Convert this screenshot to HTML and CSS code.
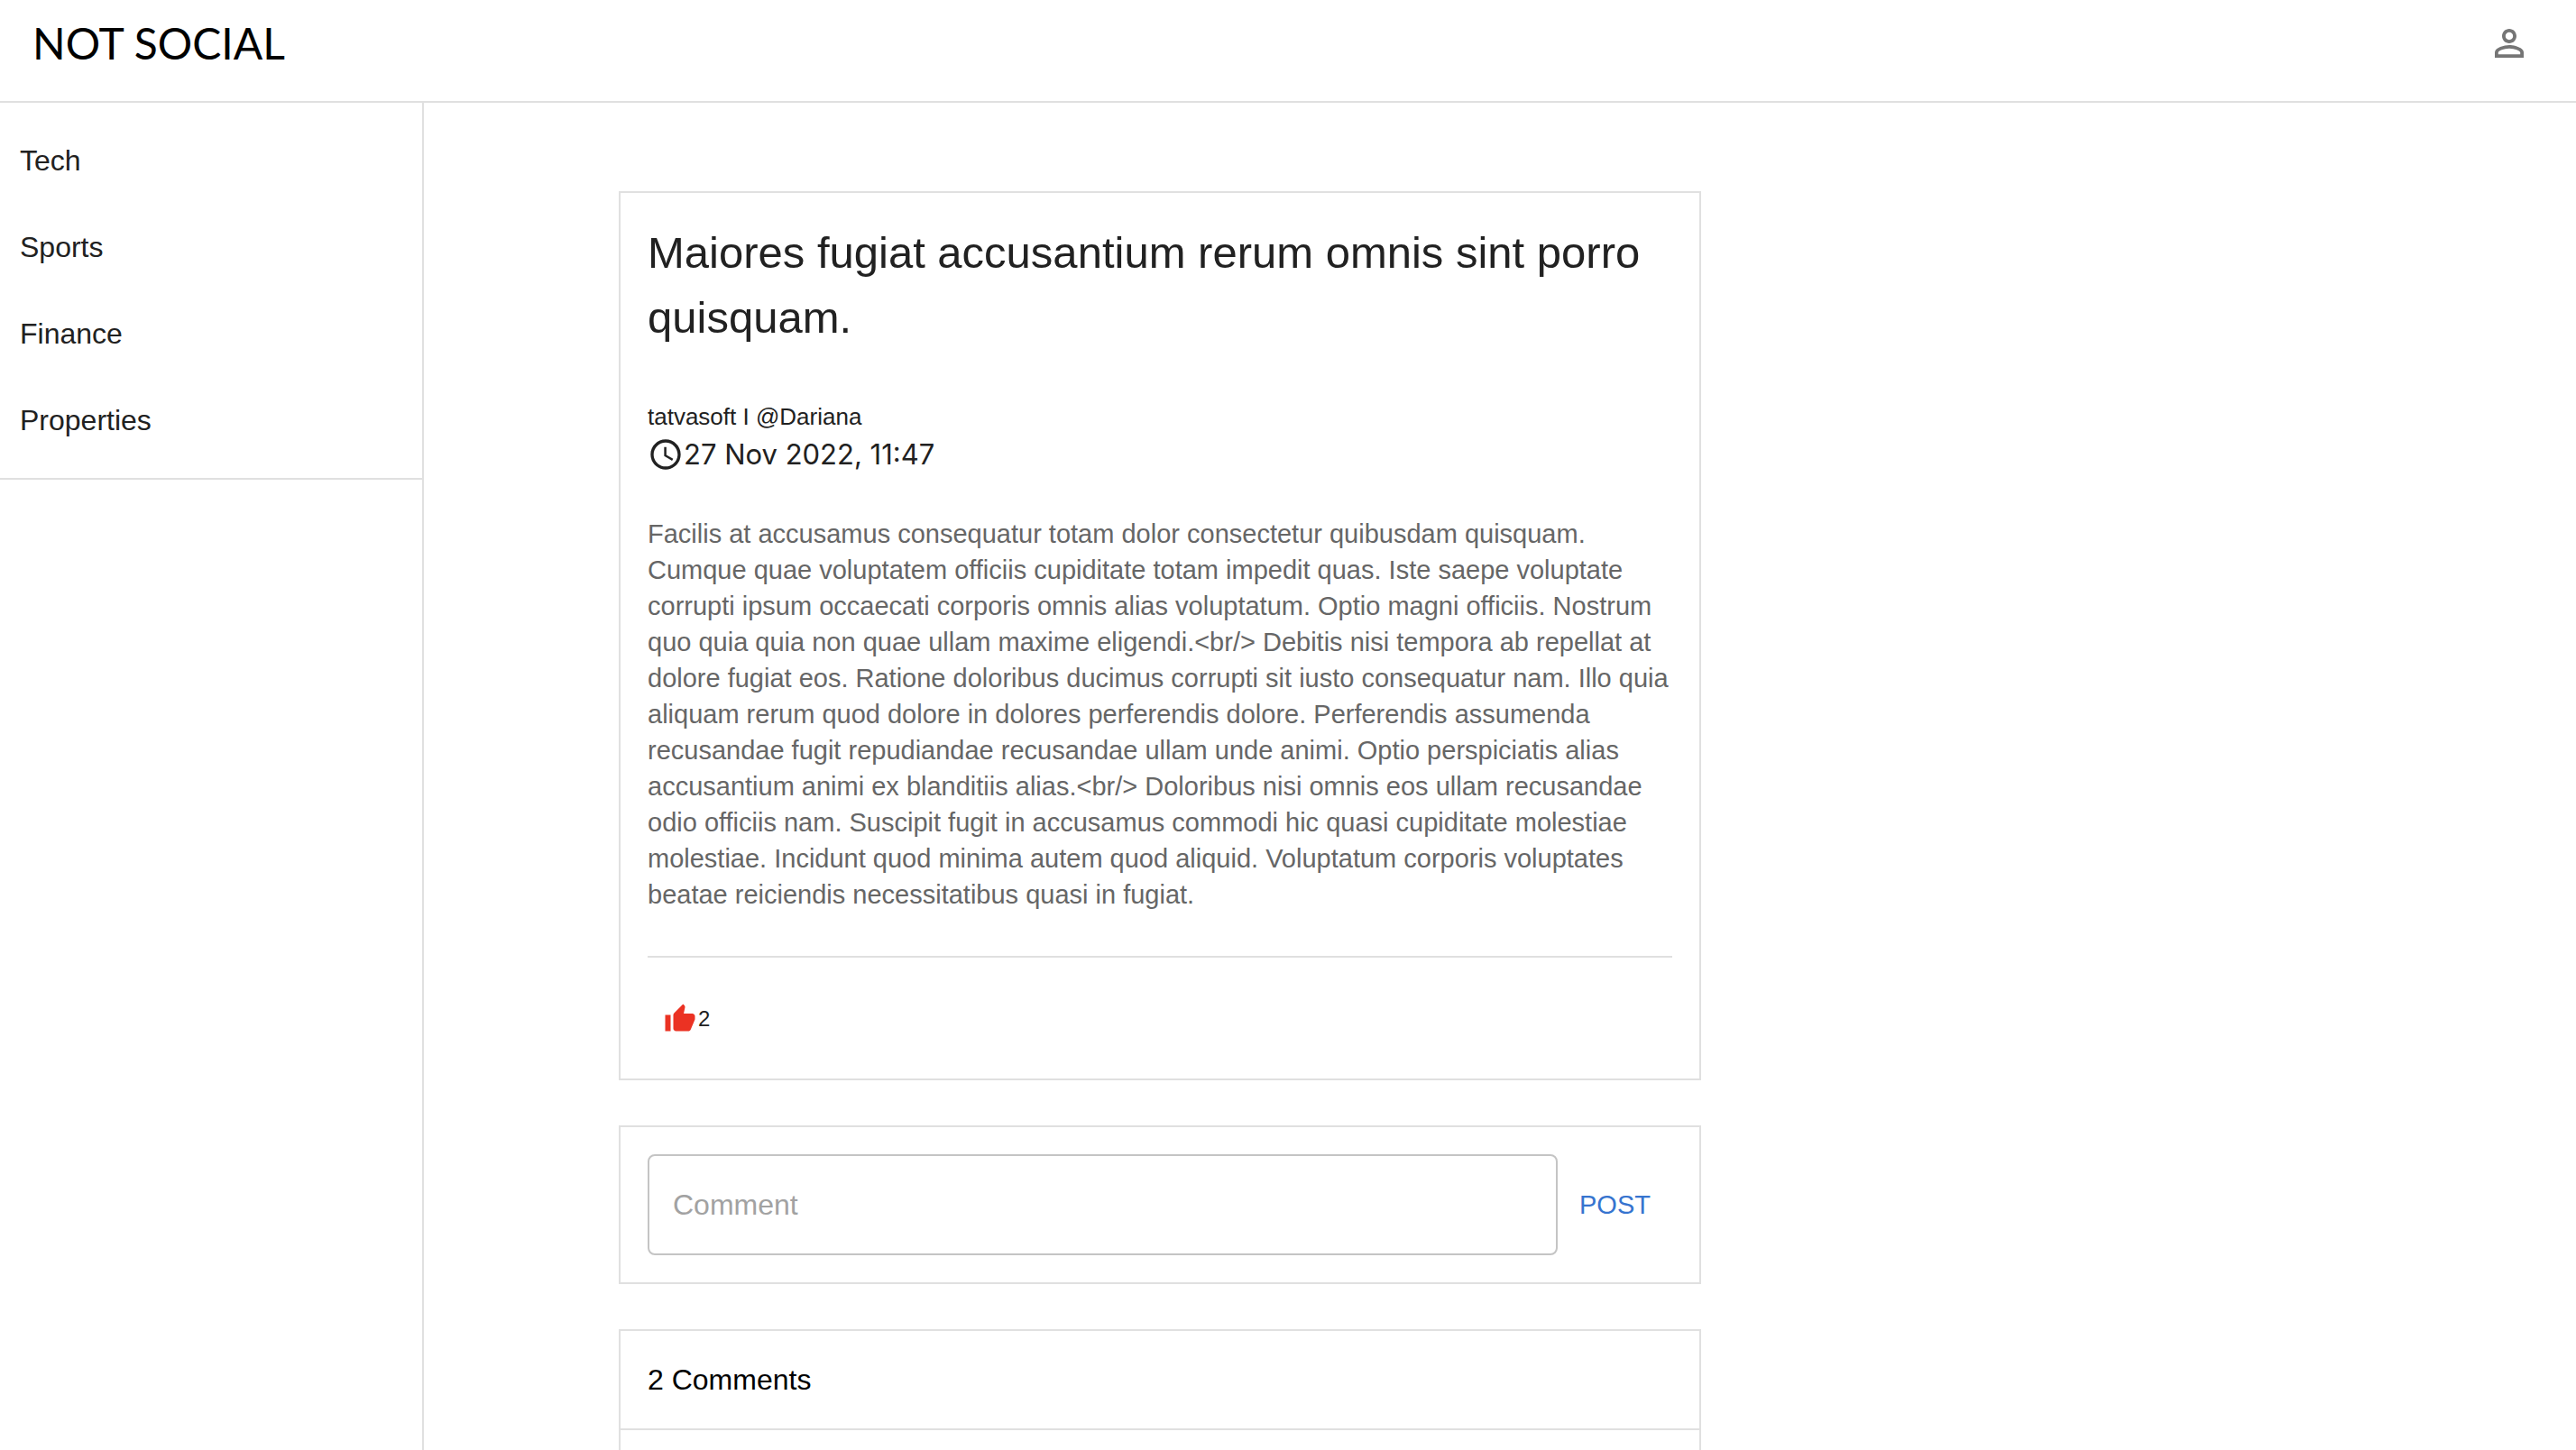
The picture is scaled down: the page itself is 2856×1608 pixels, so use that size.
FILE: index.html
```html
<!DOCTYPE html>
<html lang="en">
<head>
<meta charset="utf-8">
<meta name="viewport" content="width=device-width, initial-scale=1">
<title>Not Social</title>
<link rel="stylesheet" href="styles.css">
</head>
<body>
<header class="topbar">
  <a class="logo" href="#">NOT SOCIAL</a>
  <button class="icon-button" type="button" aria-label="Account">
    <svg class="icon-account" viewBox="0 0 24 24" aria-hidden="true"><path d="M12 5.9c1.16 0 2.1.94 2.1 2.1s-.94 2.1-2.1 2.1S9.900 9.160 9.900 8s.94-2.100 2.100-2.100m0 9c2.970 0 6.100 1.460 6.100 2.100v1.100H5.900V17c0-.64 3.130-2.100 6.100-2.100M12 4C9.790 4 8 5.790 8 8s1.790 4 4 4 4-1.790 4-4-1.790-4-4-4zm0 9c-2.670 0-8 1.340-8 4v3h16v-3c0-2.660-5.330-4-8-4z"/></svg>
  </button>
</header>
<div class="layout">
  <aside class="sidebar">
    <nav class="nav" aria-label="Categories">
      <a class="nav-link" href="#">Tech</a>
      <a class="nav-link" href="#">Sports</a>
      <a class="nav-link" href="#">Finance</a>
      <a class="nav-link" href="#">Properties</a>
    </nav>
  </aside>
  <main class="content">
    <article class="card post">
      <h1 class="post-title">Maiores fugiat accusantium rerum omnis sint porro quisquam.</h1>
      <p class="post-author">tatvasoft I @Dariana</p>
      <p class="post-date">
        <svg class="icon-clock" viewBox="0 0 24 24" aria-hidden="true"><path d="M11.990 2C6.470 2 2 6.480 2 12s4.470 10 9.990 10C17.520 22 22 17.520 22 12S17.520 2 11.990 2zM12 20c-4.420 0-8-3.580-8-8s3.580-8 8-8 8 3.580 8 8-3.580 8-8 8zm.5-13H11v6l5.250 3.150.75-1.230-4.500-2.670z"/></svg>
        <time datetime="2022-11-27T11:47">27 Nov 2022, 11:47</time>
      </p>
      <p class="post-body">Facilis at accusamus consequatur totam dolor consectetur quibusdam quisquam. Cumque quae voluptatem officiis cupiditate totam impedit quas. Iste saepe voluptate corrupti ipsum occaecati corporis omnis alias voluptatum. Optio magni officiis. Nostrum quo quia quia non quae ullam maxime eligendi.&lt;br/&gt; Debitis nisi tempora ab repellat at dolore fugiat eos. Ratione doloribus ducimus corrupti sit iusto consequatur nam. Illo quia aliquam rerum quod dolore in dolores perferendis dolore. Perferendis assumenda recusandae fugit repudiandae recusandae ullam unde animi. Optio perspiciatis alias accusantium animi ex blanditiis alias.&lt;br/&gt; Doloribus nisi omnis eos ullam recusandae odio officiis nam. Suscipit fugit in accusamus commodi hic quasi cupiditate molestiae molestiae. Incidunt quod minima autem quod aliquid. Voluptatum corporis voluptates beatae reiciendis necessitatibus quasi in fugiat.</p>
      <div class="post-actions">
        <button class="like" type="button" aria-label="Like, 2 likes">
          <svg class="icon-like" viewBox="0 0 24 24" aria-hidden="true"><path d="M1 21h4V9H1v12zm22-11c0-1.100-.9-2-2-2h-6.310l.95-4.570.03-.32c0-.41-.17-.79-.44-1.060L14.170 1 7.590 7.590C7.220 7.950 7 8.450 7 9v10c0 1.100.9 2 2 2h9c.83 0 1.540-.5 1.840-1.220l3.020-7.050c.09-.23.14-.47.14-.73v-2z"/></svg>
          <span>2</span>
        </button>
      </div>
    </article>
    <form class="card comment-form">
      <input class="comment-input" type="text" placeholder="Comment" aria-label="Comment">
      <button class="post-button" type="button">POST</button>
    </form>
    <section class="card comments">
      <h2 class="comments-title">2 Comments</h2>
    </section>
  </main>
</div>
</body>
</html>
```
FILE: styles.css
```css
* {
  box-sizing: border-box;
}

body {
  margin: 0;
  min-height: 100vh;
  display: flex;
  flex-direction: column;
  background: #fff;
  color: #212121;
  font-family: "Liberation Sans", Arial, sans-serif;
  font-size: 32px;
  line-height: 48px;
}

h1, h2, p {
  margin: 0;
  font-weight: 400;
}

a {
  color: inherit;
  text-decoration: none;
}

button, input {
  font: inherit;
  margin: 0;
}

button {
  border: 0;
  padding: 0;
  background: none;
  cursor: pointer;
}

svg {
  display: block;
  flex: none;
  fill: currentColor;
}

.topbar {
  display: flex;
  align-items: center;
  justify-content: space-between;
  padding: 24px 50px 40px 36px;
  border-bottom: 2px solid #e0e0e0;
}

.logo {
  color: #000;
  font-family: Lato, sans-serif;
  font-size: 48px;
}

.icon-button {
  color: #757575;
}

.icon-account {
  width: 48px;
  height: 48px;
}

.layout {
  flex: 1;
  display: flex;
}

.sidebar {
  flex: none;
  width: 470px;
  border-right: 2px solid #e0e0e0;
}

.nav {
  display: flex;
  flex-direction: column;
  padding: 16px 0;
  border-bottom: 2px solid #e0e0e0;
}

.nav-link {
  padding: 24px 22px;
}

.content {
  flex: 1;
  min-width: 0;
  display: flex;
  flex-direction: column;
  gap: 50px;
  padding: 98px 216px 0;
}

.card {
  width: 100%;
  max-width: 1200px;
  border: 2px solid #e0e0e0;
}

.post {
  padding: 30px 30px 0;
}

.post-title {
  font-size: 49px;
  line-height: 72px;
}

.post-author {
  margin-top: 56px;
  font-size: 26px;
  line-height: 36px;
}

.post-date {
  display: flex;
  align-items: center;
  font-family: Inter, sans-serif;
  font-size: 31px;
}

.icon-clock {
  width: 40px;
  height: 40px;
}

.post-body {
  margin-top: 44px;
  color: #666;
  font-size: 29px;
  line-height: 40px;
}

.post-actions {
  display: flex;
  margin-top: 48px;
  padding: 44px 18px 42px;
  border-top: 2px solid #e0e0e0;
}

.like {
  display: flex;
  align-items: center;
  gap: 2px;
  color: #212121;
  font-size: 24px;
}

.icon-like {
  width: 36px;
  height: 36px;
  color: #eb3223;
}

.comment-form {
  display: flex;
  align-items: center;
  gap: 24px;
  padding: 30px;
}

.comment-input {
  flex: 1;
  min-width: 0;
  height: 112px;
  padding: 0 26px;
  border: 2px solid #c4c4c4;
  border-radius: 8px;
  background: #fff;
  color: #212121;
}

.comment-input::placeholder {
  color: #a2a2a2;
  opacity: 1;
}

.post-button {
  padding: 0 24px 0 0;
  color: #3674cf;
  font-size: 29px;
}

.comments {
  flex: 1;
  border-bottom: 0;
}

.comments-title {
  padding: 30px;
  border-bottom: 2px solid #e0e0e0;
  color: #000;
  font-size: 32px;
}
```
